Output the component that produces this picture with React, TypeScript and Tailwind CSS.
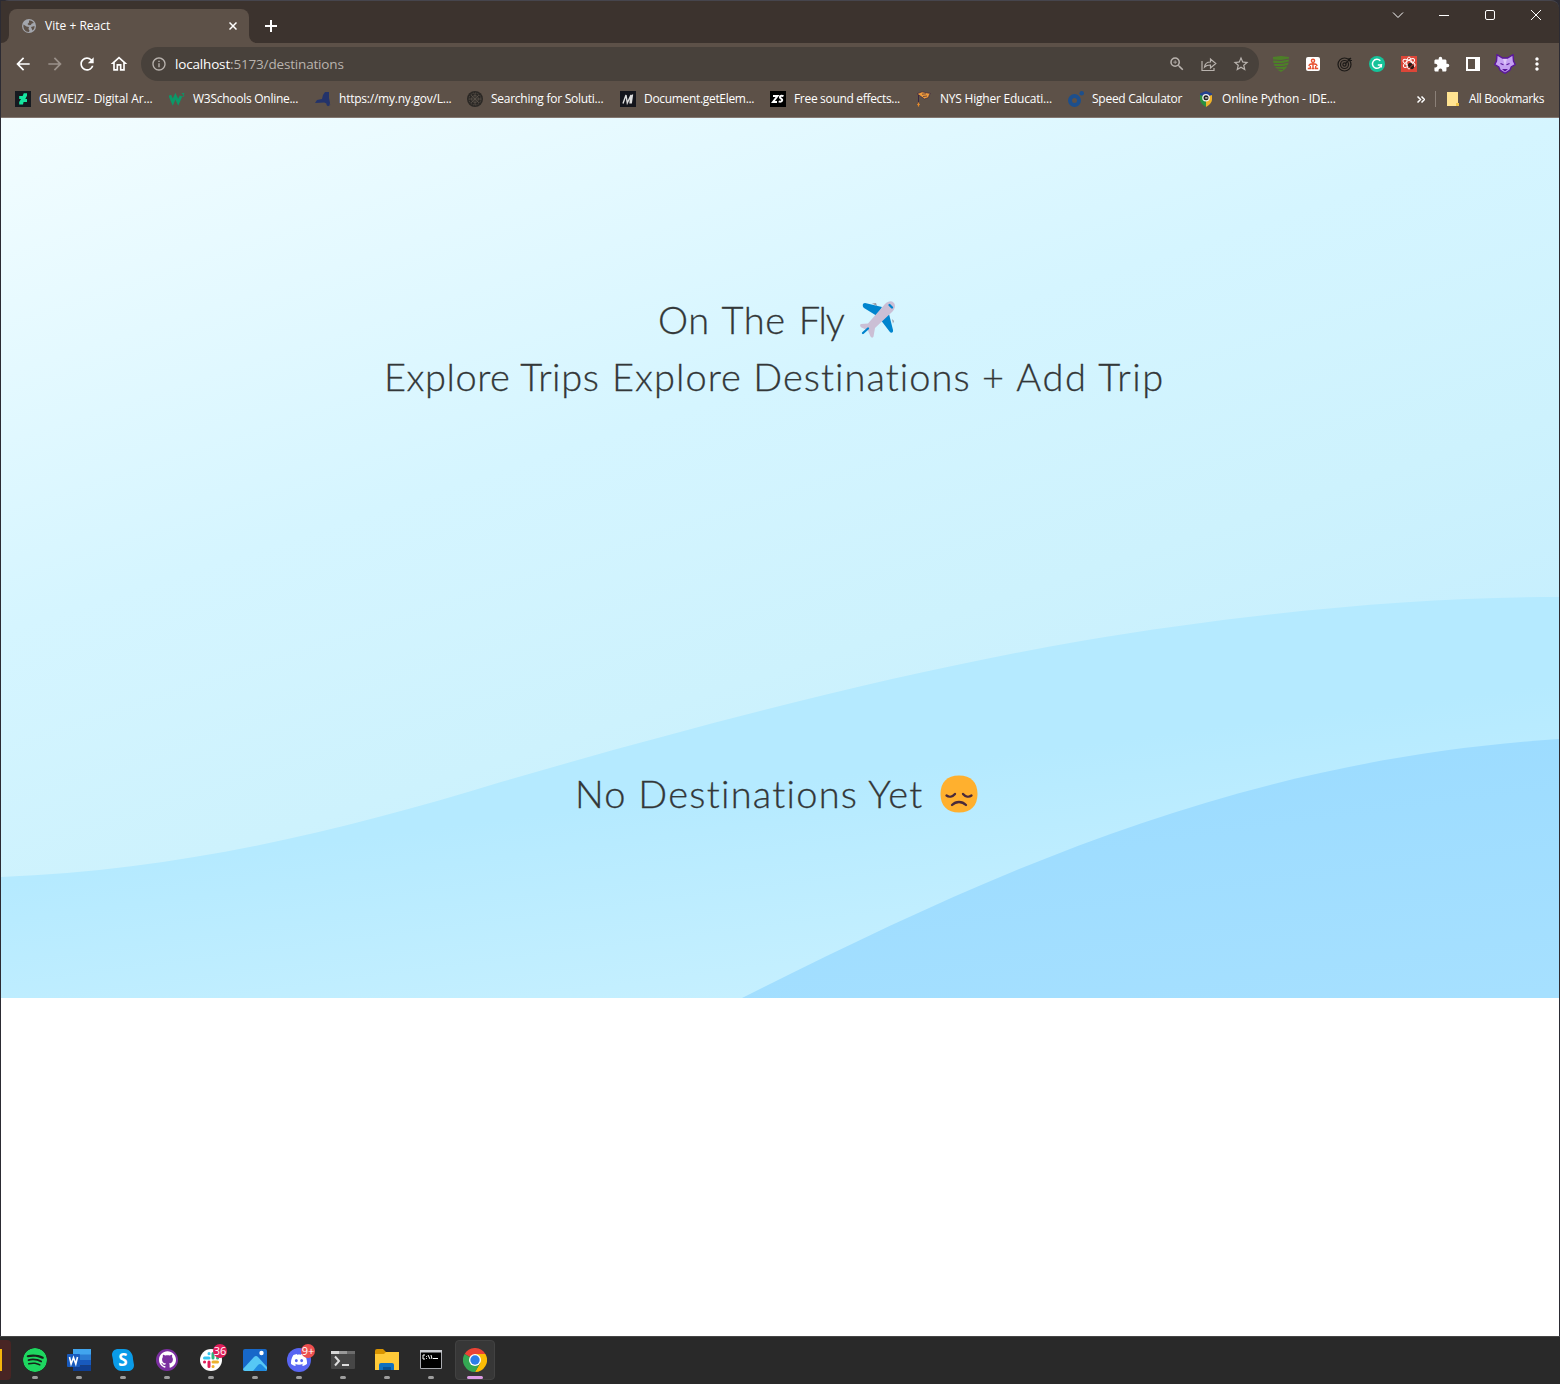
import React from "react";
import { SiSpotify, SiGithub, SiDiscord } from "react-icons/si";
import { MdArrowBack, MdArrowForward, MdRefresh, MdOutlineHome, MdInfoOutline, MdZoomIn, MdStarBorder, MdExtension, MdMoreVert } from "react-icons/md";

function Tile({ children }: { children: React.ReactNode }) {
  return (
    <svg className="block size-4 shrink-0" viewBox="0 0 16 16">
      {children}
    </svg>
  );
}

const deviant = (
  <Tile>
    <path fill="#151a20" d="M0 0h16v16H0z" />
    <path fill="#16e5a0" d="M8.8 2.3H12v2.500L10.300 8H12v3H8.600L8 13.600H4.200v-2.700L6 8H4.200V5h3.400z" />
  </Tile>
);
const w3 = (
  <Tile>
    <path fill="none" stroke="#0b9868" strokeWidth="2.900" d="M.8 4.200l3 7 2.600-6 2.800 6L12 5" />
    <path fill="none" stroke="#0b9868" strokeWidth="1" d="M12.800 2.600h2.200l-1 1.300c1.400.2 1.200 1.900-.6 1.700" />
  </Tile>
);
const nyMap = (
  <Tile>
    <path fill="#23336b" d="M0 12l2-3 5-1 1-4 2-3h4v6l1 5-.5 2 1.500-.5-3 1.800-1.300-1-.4-1.800-2-1z" />
  </Tile>
);
const orb = (
  <Tile>
    <circle cx="8" cy="8" r="8" fill="#2b2825" />
    <g fill="none" stroke="#5e564e" strokeWidth=".7">
      <circle cx="8" cy="8" r="6" strokeDasharray="1.500 1" />
      <circle cx="8" cy="8" r="3.500" />
      <path d="M8 2v12M2 8h12M4 4l8 8M12 4l-8 8" />
    </g>
  </Tile>
);
const mdn = (
  <Tile>
    <path fill="#14151c" d="M0 0h16v16H0z" />
    <path fill="none" stroke="#dedede" strokeWidth="1.400" d="M3 12.500L6 4l1.300 8L11 4l-1 8.500M12.500 3.500l-1.300 9" />
  </Tile>
);
const zapsplat = (
  <Tile>
    <path fill="#000" d="M0 0h16v16H0z" />
    <path fill="none" stroke="#fff" strokeWidth="2" d="M3 5h4.500L3 11h4M13.500 5.200c-2-1-4-.4-3.500 1.300.5 1.200 2.500 1 2.200 2.700-.3 1.600-2 1.800-3.500 1.200" />
  </Tile>
);
const grad = (
  <Tile>
    <path d="M1 2.800L6 .8l8.500 1.700-1.200 1.500-.8 2.500L8.500 8 5 5.500z" fill="#ee9a3a" stroke="#3a2740" strokeWidth=".7" />
    <path d="M6 3.200l4-.4M7 5.500l4-.5" stroke="#3a2740" strokeWidth=".7" />
    <path d="M2.500 4v8" stroke="#3a2740" strokeWidth="1" />
    <path d="M2.500 11.500v4M1.200 13.500h2.600" stroke="#e58a2b" strokeWidth="1.200" />
  </Tile>
);
const speed = (
  <Tile>
    <circle cx="6.500" cy="9.500" r="4.500" fill="none" stroke="#1d4f8c" strokeWidth="4" />
    <circle cx="13.700" cy="2.300" r="2.300" fill="#1d4f8c" />
  </Tile>
);
const python = (
  <Tile>
    <path fill="#23418f" d="M8 0l6 2.500v4H2v-4z" />
    <path fill="#2a9140" d="M2 4v4c0 4 3 6 6 8V6z" />
    <path fill="#f0b429" d="M14 4v4c0 4-3 6-6 8V6z" />
    <circle cx="8" cy="6.800" r="3.800" fill="#efefef" />
    <circle cx="8" cy="6.800" r="2.500" fill="#222" />
    <path fill="#eee" d="M7.200 6.300h2.300v1.200H7.200z" />
  </Tile>
);

const bookmarks = [
  { icon: deviant, label: "GUWEIZ - Digital Ar...", box: "w-[154px]", track: "tracking-[-0.1px]" },
  { icon: w3, label: "W3Schools Online...", box: "w-[146px]", track: "tracking-[-0.27px]" },
  { icon: nyMap, label: "https://my.ny.gov/L...", box: "w-[152px]", track: "tracking-[-0.23px]" },
  { icon: orb, label: "Searching for Soluti...", box: "w-[153px]", track: "tracking-[-0.26px]" },
  { icon: mdn, label: "Document.getElem...", box: "w-[150px]", track: "tracking-[-0.32px]" },
  { icon: zapsplat, label: "Free sound effects...", box: "w-[146px]", track: "tracking-[-0.32px]" },
  { icon: grad, label: "NYS Higher Educati...", box: "w-[152px]", track: "tracking-[-0.22px]" },
  { icon: speed, label: "Speed Calculator", box: "w-[130px]", track: "tracking-[-0.26px]" },
  { icon: python, label: "Online Python - IDE...", box: "w-[150px]", track: "tracking-[-0.18px]" },
];

function TitleBar() {
  return (
    <div className="flex h-[43px] items-start justify-between rounded-t-lg border-t border-[#46454d] bg-[#3c332e]">
      <div className="flex h-[42px]">
        <div className="flex w-2 items-end bg-[#5d5148]">
          <div className="h-full w-full rounded-br-lg bg-[#3c332e]" />
        </div>
        <div className="bg-[#3c332e] pt-2">
          <div className="flex h-[34px] w-60 items-center rounded-t-lg bg-[#5d5148] px-3 text-white">
            <svg className="size-4" viewBox="0 0 16 16">
              <circle cx="8" cy="8" r="7" fill="#a3a6ad" />
              <path fill="#5d5148" d="M2.500 6.500l3 2 2.500.5-.5 2 1 1.500-.5 1.500C4 14 1.800 10.500 2.500 6.500zM8 2.500c2-.5 4 .8 4.800 2.500l-2 .5-1 1.500-2 .3L6.500 6 8 4.500zM10 9l3.500-1c.2 2-.7 3.700-2 4.500z" />
            </svg>
            <span className="ml-2 grow text-xs tracking-[0.02px]">Vite + React</span>
            <svg className="size-2" viewBox="0 0 8 8" fill="none" stroke="#fff" strokeWidth="1.500">
              <path d="M.5.5l7 7M7.500.5l-7 7" />
            </svg>
          </div>
        </div>
        <div className="bg-[#5d5148]">
          <div className="flex h-full w-11 items-center rounded-bl-lg bg-[#3c332e] pt-2 pl-4">
            <svg className="size-3" viewBox="0 0 12 12" stroke="#fff" strokeWidth="2">
              <path d="M6 0v12M0 6h12" />
            </svg>
          </div>
        </div>
      </div>
      <svg className="mt-2 mr-[18px] h-3 w-[150px]" viewBox="0 0 150 12" fill="none" stroke="#fff" strokeWidth="1">
        <path d="M2 3.500l5 5 5-5M48 6.500h10M140 1l10 10M150 1l-10 10" />
        <rect x="94.500" y="1.500" width="9" height="9" rx="1.500" />
      </svg>
    </div>
  );
}

const extensions = [
  <Tile>
    <path fill="#4d8028" d="M0 1l8-1 8 1c0 7-1 11-8 15C1 12 0 8 0 1z" />
    <path stroke="#5d5148" strokeWidth="1" d="M0 4l8 .5L16 3M0 7.500h9l7-1.500M0 10.500h9l7-1M3 13l7 .5" fill="none" />
  </Tile>,
  <svg className="size-[14px]" viewBox="0 0 14 14">
    <rect width="14" height="14" rx="2" fill="#fff" />
    <g fill="none" stroke="#e8512f" strokeWidth="1.400">
      <circle cx="7" cy="3.800" r="1.600" />
      <path d="M7 5.500v6M3 9c0-3 8-3 8 0M1.800 11.500h2.500V9M12.200 11.500H9.700V9M5.500 11.500h3" />
    </g>
  </svg>,
  <Tile>
    <g fill="none" stroke="#1c1917" strokeWidth="1.200">
      <circle cx="7.500" cy="8.500" r="6.500" />
      <circle cx="7.500" cy="8.500" r="4" />
      <circle cx="7.500" cy="8.500" r="1.600" />
      <path d="M8 8l6-6M12 2v2.500h3" />
    </g>
  </Tile>,
  <Tile>
    <circle cx="8" cy="8" r="8" fill="#15c39a" />
    <path fill="none" stroke="#fff" strokeWidth="1.500" d="M11.300 4.800A4.500 4.500 0 1 0 12.300 9H8.800M12.300 8v3.500" />
  </Tile>,
  <Tile>
    <path fill="#dc4638" d="M0 0h16v16H0z" />
    <g fill="none" stroke="#fff" strokeWidth="1">
      <ellipse cx="8" cy="7" rx="6.500" ry="2.500" transform="rotate(25 8 7)" />
      <ellipse cx="8" cy="7" rx="6.500" ry="2.500" transform="rotate(-35 8 7)" />
      <ellipse cx="8" cy="7" rx="6" ry="2.300" transform="rotate(90 8 7)" />
    </g>
    <ellipse cx="10" cy="10" rx="3.500" ry="2.500" transform="rotate(45 10 10)" fill="#2a1916" />
    <path d="M8.500 12l4-4" stroke="#dc4638" />
  </Tile>,
  <MdExtension size={17} />,
  <svg className="size-[14px]" viewBox="0 0 14 14">
    <path fill="#fff" fillRule="evenodd" d="M0 0h14v14H0zM2 2v10h7V2z" />
  </svg>,
  <svg className="h-5 w-[22px]" viewBox="0 0 22 20">
    <path d="M3 .7L8.500 4h5L19 .7l.5 6.300 1.700 3.500-4 2.500-1.200 3-5 3.300-5-3.300-1.200-3-4-2.500L2.500 7z" fill="#c5a1f2" stroke="#5b179b" strokeWidth="1.400" />
    <path d="M6.500 9.500l3 1.200M15.500 9.500l-3 1.200M9.500 15.500l1.500 1.500 1.500-1.500z" stroke="#5b179b" strokeWidth="1.200" fill="#5b179b" />
    <path d="M9 5h4l-2 7z" fill="#dfc9fa" />
  </svg>,
  <MdMoreVert size={20} />,
];

function Toolbar() {
  return (
    <div className="flex h-[42px] items-center bg-[#5d5148] pl-3 text-white">
      <div className="flex gap-3">
        <MdArrowBack size={20} />
        <MdArrowForward size={20} color="#9b918a" />
        <MdRefresh size={20} />
        <MdOutlineHome size={20} />
      </div>
      <div className="ml-3 flex h-[34px] w-[1118px] shrink-0 items-center rounded-full bg-[#48413b] pr-[9px] pl-[10px] text-[#b9b3ae]">
        <MdInfoOutline size={16} />
        <span className="ml-2 grow text-[13.5px] tracking-[-0.17px]">
          <span className="text-white">localhost</span>:5173/destinations
        </span>
        <div className="flex items-center gap-[15px]">
          <MdZoomIn size={18} />
          <svg className="size-4" viewBox="0 0 16 16" fill="none" stroke="currentColor" strokeWidth="1.200">
            <path d="M1 5v9.500h12V12M3.500 11c.5-3.500 2.500-5 6-5V3l5.300 4.500L9.500 12V9c-2.500 0-4.500.5-6 2z" />
          </svg>
          <MdStarBorder size={18} />
        </div>
      </div>
      <div className="ml-[6px] flex shrink-0 items-center">
        {extensions.map((icon, i) => (
          <div key={i} className="flex w-8 justify-center">
            {icon}
          </div>
        ))}
      </div>
    </div>
  );
}

function BookmarksBar() {
  return (
    <div className="flex h-[33px] items-center border-b border-[#82766f] bg-[#5d5148] pb-1 pl-[14px] text-xs whitespace-nowrap text-white">
      {bookmarks.map((b) => (
        <div key={b.label} className={`flex shrink-0 items-center gap-2 ${b.box}`}>
          {b.icon}
          <span className={b.track}>{b.label}</span>
        </div>
      ))}
      <div className="flex grow items-center justify-end pr-[15px]">
        <svg className="h-[7px] w-2" viewBox="0 0 8 7" fill="none" stroke="#fff" strokeWidth="1.500">
          <path d="M.5.5l3 3-3 3M4.500.5l3 3-3 3" />
        </svg>
        <div className="mr-[11px] ml-[10px] h-4 w-px bg-[#8b8078]" />
        <svg className="mr-[10px] h-[14px] w-3" viewBox="0 0 12 14">
          <path fill="#ffe391" d="M0 0h11v11h1v3H0z" />
          <path fill="#f0c64d" d="M9 11h3v3H9z" />
        </svg>
        <span className="tracking-[-0.38px]">All Bookmarks</span>
      </div>
    </div>
  );
}

function Waves() {
  return (
    <svg className="absolute inset-0 h-full w-full" viewBox="0 0 1558 880" preserveAspectRatio="none">
      <defs>
        <linearGradient id="upper" gradientUnits="userSpaceOnUse" x1="99" y1="752" x2="127" y2="970">
          <stop offset="0" stopColor="#b5eaff" />
          <stop offset="1" stopColor="#c6f0ff" />
        </linearGradient>
        <linearGradient id="lower" gradientUnits="userSpaceOnUse" x1="106" y1="809" x2="140" y2="1063">
          <stop offset="0" stopColor="#9ddcff" />
          <stop offset="1" stopColor="#a6e0ff" />
        </linearGradient>
      </defs>
      <path fill="url(#upper)" d="M0 759C180 752 340 713 500 664C700 606 900 554 1080 523C1250 494 1420 479 1558 479V880H0z" />
      <path fill="url(#lower)" d="M741 880C1000 750 1240 642 1558 621V880z" />
    </svg>
  );
}

function Plane() {
  return (
    <svg className="h-[38px] w-[38px]" viewBox="0 0 38 38">
      <path d="M14 2.500l4-.5 1 3M34 18l2 2-1 2.500" fill="#9b9aa4" />
      <path fill="#0084ce" d="M7 2L24 6l-5 9L6 7C4 5 4.500 2 7 2zM31 13l4 16c.5 3-2 3.500-3.500 1.500L22 18z" />
      <path fill="#cbbfd5" d="M35.500 1.500c2.500 2.500 1.500 6-1 9L17 27l-1.500 8.500c-.3 1.500-2.300 1.500-3 0l-2.500-6-6.500-3C2 25.500 1.500 23.500 3 23l7-.5L27 3c3-3 6.500-3.500 8.500-1.500z" />
      <path stroke="#0084ce" strokeWidth="2.300" strokeLinecap="round" d="M5 32l5-4.500M31.500 4l2.500 2.500" />
    </svg>
  );
}

function SadFace() {
  return (
    <svg className="h-[38px] w-[38px]" viewBox="0 0 38 38">
      <path fill="#ffb02e" d="M19 .5c12 0 18.500 7 18.500 18.500S31 37.500 19 37.500.5 30.500.5 19 7 .5 19 .5z" />
      <path fill="none" stroke="#4a2a3a" strokeWidth="2.300" strokeLinecap="round" d="M6.500 20.500c2.500 2 6 1.500 8.500-1.500M31.500 20.500c-2.500 2-6 1.500-8.500-1.500M12 30c4-4 10-4 14 0" />
    </svg>
  );
}

function Page() {
  return (
    <main className="relative h-[880px] overflow-hidden bg-[linear-gradient(162deg,#f3fdff_0%,#d5f5ff_37%,#cdf2fd_58%,#c7effe_72%)] font-[Lato] text-[38px] leading-[57px] font-light text-[#333738] [-webkit-text-stroke:0.3px_#333738]">
      <Waves />
      <div className="relative whitespace-nowrap">
        <h1 className="flex items-center pt-[173px] pl-[657px]">
          <span className="w-[200px] tracking-[0.6px] [word-spacing:2px]">
            On The <span className="tracking-[-1.2px]">Fly</span>
          </span>
          <Plane />
        </h1>
        <nav className="flex pl-[383px]">
          <a className="w-[228px] tracking-[0.55px]">Explore Trips</a>
          <a className="w-[370px] tracking-[1.05px]">Explore Destinations</a>
          <a className="tracking-[1.6px]">+ Add Trip</a>
        </nav>
        <h2 className="flex items-center pt-[360px] pl-[574px]">
          <span className="w-[365px] tracking-[1.25px]">No Destinations Yet</span>
          <SadFace />
        </h2>
      </div>
    </main>
  );
}

const apps = [
  <SiSpotify size={24} color="#1ed760" className="rounded-full bg-[#17231a]" />,
  <svg className="size-6" viewBox="0 0 24 24">
    <path fill="#41a5ee" d="M6 1h18v6H6z" />
    <path fill="#2b7cd3" d="M6 6.500h18V12H6z" />
    <path fill="#185abd" d="M6 12h18v5.500H6z" />
    <path fill="#103f91" d="M6 17.500h18V23H6z" />
    <rect y="6" width="13" height="13" rx="1" fill="#185abd" />
    <path fill="none" stroke="#fff" strokeWidth="1.600" d="M2.500 9l1.600 7L6.500 9.500 8.800 16l1.700-7" />
  </svg>,
  <svg className="size-6" viewBox="0 0 24 24">
    <path fill="#0a9be8" d="M7 1h6c6 0 9 5 9 10l1 6c0 4-3 6-6 6h-6C5 23 2 18 2 12L1 7c0-4 3-6 6-6z" />
    <text x="12" y="18" textAnchor="middle" fontSize="17" fontWeight="700" fill="#fff">S</text>
  </svg>,
  <span className="flex size-[22px] items-center justify-center rounded-full bg-[#7b2fa0]">
    <SiGithub size={17} color="#fff" />
  </span>,
  <svg className="size-6 overflow-visible" viewBox="0 0 24 24">
    <circle cx="12" cy="12" r="11" fill="#fff" />
    <g fill="none" strokeWidth="3" strokeLinecap="round">
      <path stroke="#36c5f0" d="M5.500 10H10M10 5.500v.2" />
      <path stroke="#2eb67d" d="M14 5.500V10M18.500 10h.1" />
      <path stroke="#ecb22e" d="M14 14h4.500M14 18.500h.1" />
      <path stroke="#e01e5a" d="M10 14v4.500M5.500 14h.1" />
    </g>
    <circle cx="21" cy="3" r="7" fill="#e01e5a" />
    <text x="21" y="7" textAnchor="middle" fontSize="11" fill="#fff">36</text>
  </svg>,
  <svg className="size-6" viewBox="0 0 24 24">
    <rect y="1" width="24" height="22" rx="2" fill="#1768c9" />
    <path fill="#56c8f5" d="M0 21L11 9q2-2 4 0l9 10v2q0 2-2 2H2q-2 0-2-2z" />
    <path fill="#1f8ae0" d="M10 23l5-6q2-2 4 0l5 5-2 1z" />
    <circle cx="18.500" cy="5" r="2.200" fill="#fff" />
  </svg>,
  <svg className="size-6 overflow-visible" viewBox="0 0 24 24">
    <circle cx="12" cy="12" r="12" fill="#5865f2" />
    <SiDiscord x={4} y={4} size={16} color="#fff" />
    <circle cx="21" cy="3" r="7" fill="#ed4f4f" />
    <text x="21" y="7" textAnchor="middle" fontSize="11" fill="#fff">9+</text>
  </svg>,
  <svg className="size-6" viewBox="0 0 24 24">
    <rect y="3" width="24" height="18" rx="1" fill="#464646" />
    <path fill="#d6d6d6" d="M0 3h8v3H0z" />
    <path fill="#999" d="M8 3h8v3H8z" />
    <path fill="#6c6c6c" d="M16 3h8v3h-8z" />
    <path fill="none" stroke="#ddd" strokeWidth="2" d="M4 8.500l4 4.500-4 4.500M11 17h7" />
  </svg>,
  <svg className="size-6" viewBox="0 0 24 24">
    <path fill="#d89400" d="M0 3q0-2 2-2h6l3 3v4H0z" />
    <path fill="#ffca38" d="M0 6h9l2-2h13v18H0z" />
    <path fill="#0f70c0" d="M4 22v-5q0-2 2-2h11q2 0 2 2v5z" />
    <path fill="#075295" d="M8 19h8v3H8z" />
  </svg>,
  <svg className="size-6" viewBox="0 0 24 24">
    <path fill="#000" stroke="#a9abb0" d="M1.500 2.500h21v18h-21z" />
    <path fill="#c9cbd0" d="M1 2h22v2.500H1z" />
    <path stroke="#fff" strokeWidth="1" fill="none" d="M6 7H4v4h2M7.500 8v.8M7.500 10.200v.8M9 7l2 4M12 7l1 4M14 10.500h5" />
  </svg>,
  <svg className="size-6" viewBox="0 0 24 24">
    <path fill="#ea4335" d="M12 12L1.600 6A12 12 0 0 1 22.400 6z" />
    <path fill="#fbbc05" d="M12 12l5.200 3L12 24A12 12 0 0 0 22.400 6H12z" />
    <path fill="#34a853" d="M12 12L1.600 6A12 12 0 0 0 12 24l5.200-9z" />
    <circle cx="12" cy="12" r="6" fill="#fff" />
    <circle cx="12" cy="12" r="4.700" fill="#2b7de9" />
  </svg>,
];

function Taskbar() {
  return (
    <footer className="flex h-12 items-center gap-1 border-t border-[#454545] bg-[#292929] pb-[2px]">
      <div className="flex h-10 w-[11px] items-center rounded-r bg-[#482524]">
        <div className="h-[22px] w-[2px] bg-[#f6b50b]" />
      </div>
      {apps.map((icon, i) => {
        const active = i === apps.length - 1;
        return (
          <div key={i} className={`flex h-10 w-10 flex-col items-center rounded ${active ? "border border-[#424242] bg-[#373737] pt-[7px]" : "pt-2"}`}>
            <div className="flex size-6 items-center justify-center">{icon}</div>
            <div className={`mt-1 h-[3px] rounded-full ${active ? "w-4 bg-[#dc9be4]" : "w-[6px] bg-[#9d9d9d]"}`} />
          </div>
        );
      })}
    </footer>
  );
}

export default function App() {
  return (
    <div className="flex h-[1384px] w-[1560px] flex-col overflow-hidden bg-[#2c2b33] font-['Open_Sans',sans-serif]">
      <div className="flex grow flex-col px-px">
        <TitleBar />
        <Toolbar />
        <BookmarksBar />
        <Page />
        <div className="grow bg-white" />
      </div>
      <Taskbar />
    </div>
  );
}
